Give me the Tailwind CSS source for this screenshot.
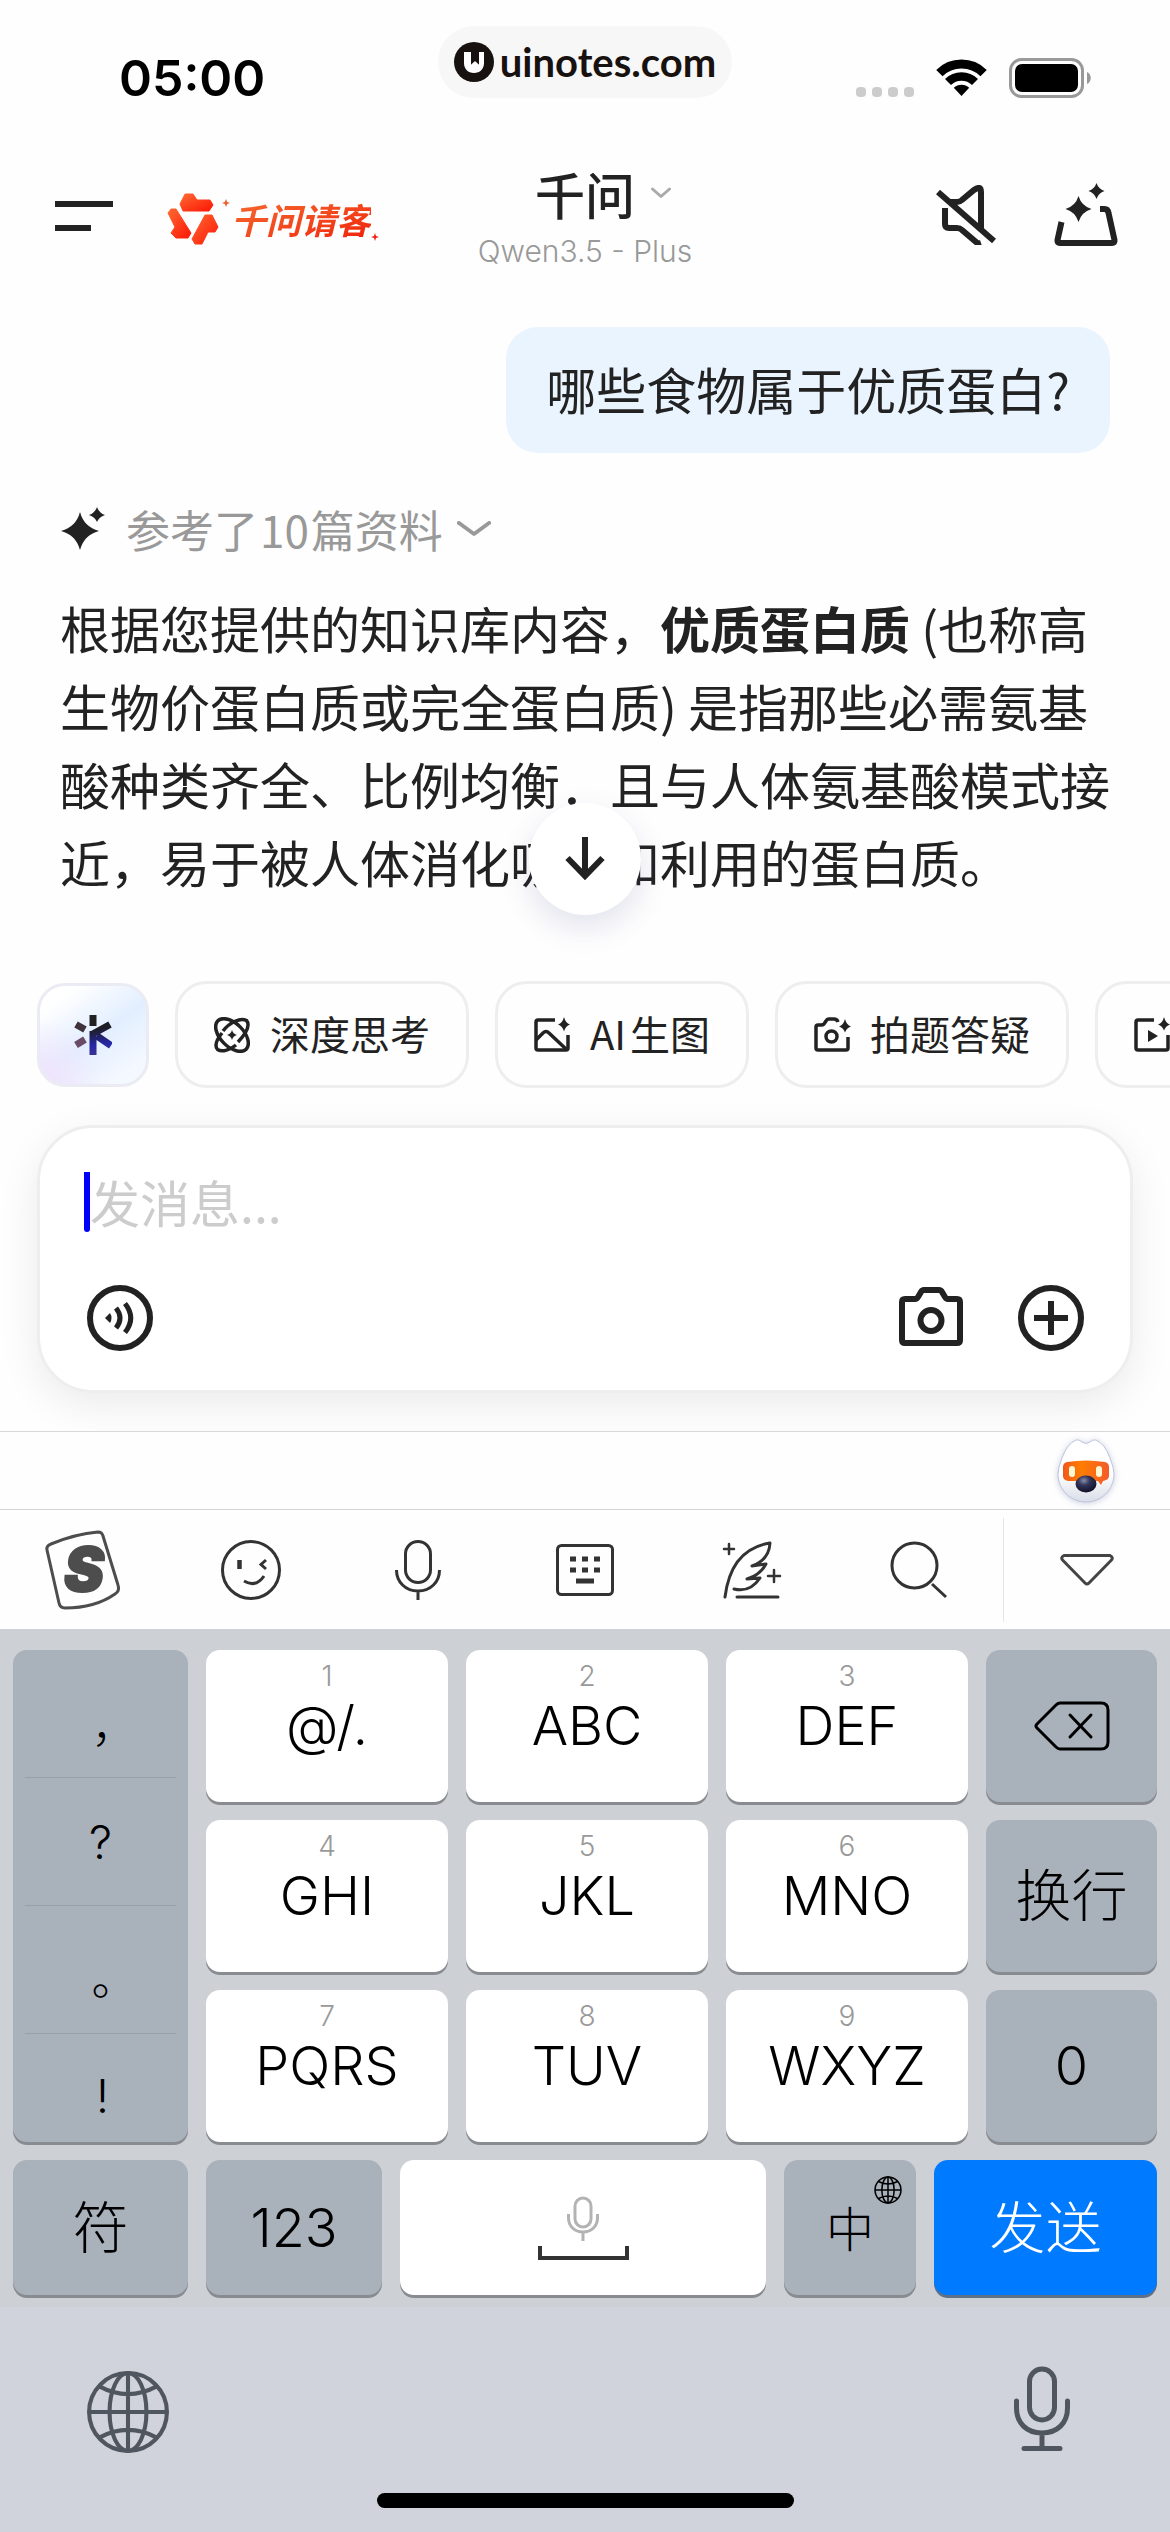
<!DOCTYPE html>
<html lang="zh-CN">
<head>
  <meta charset="utf-8"/>
  <meta content="width=device-width, initial-scale=1.0" name="viewport"/>
  <title>千问</title>
  <script src="https://cdn.jsdelivr.net/npm/@tailwindcss/browser@4"></script>
</head>
<body class="flex min-h-screen flex-col overflow-x-hidden bg-[#fefefe] font-['Noto_Sans_CJK_SC',sans-serif] text-[#222]">

  <!-- Status bar -->
  <div class="grid grid-cols-[1fr_auto_1fr] items-end pt-[26px]">
    <div class="pl-[119px] font-['Inter',sans-serif] text-[50px] leading-10 font-semibold text-black">05:00</div>
    <div class="flex h-18 items-center gap-1.5 rounded-full bg-[#f7f7f7] pr-4 pl-4">
      <svg class="size-10" viewBox="0 0 40 40">
        <circle cx="20" cy="20" r="20" fill="#171210"/>
        <path d="M10 10h7v12.500l4-3.500 4 3.500V10h5v11c0 6-4 10-10 10s-10-4-10-10z" fill="#fff"/>
        <path d="M17 10h8v12.500l-4-4-4 4z" fill="#171210"/>
      </svg>
      <span class="font-['Lato',sans-serif] text-[40px] leading-10 font-bold text-[#171210]">uinotes.com</span>
    </div>
    <div class="flex items-center justify-end pr-[79px]">
      <div class="mt-7 mr-[22px] flex gap-1.5">
        <i class="size-2.5 rounded-[4px] bg-[#ccc]"></i>
        <i class="size-2.5 rounded-[4px] bg-[#ccc]"></i>
        <i class="size-2.5 rounded-[4px] bg-[#ccc]"></i>
        <i class="size-2.5 rounded-[4px] bg-[#ccc]"></i>
      </div>
      <svg class="mr-[22px] h-[38px] w-[51px]" viewBox="0 0 51 38" fill="none" stroke="#000">
        <path d="M3.400 14.100a31.500 31.500 0 0 1 44.200 0" stroke-width="9"/>
        <path d="M12 23a19.200 19.200 0 0 1 27 0" stroke-width="8.500"/>
        <path d="M25.500 37l-7.700-8.200a11 11 0 0 1 15.400 0z" fill="#000" stroke="none"/>
      </svg>
      <svg class="h-10 w-[82px]" viewBox="0 0 82 40">
        <rect x="1.500" y="1.500" width="72" height="37" rx="11" fill="none" stroke="#999" stroke-width="3"/>
        <rect x="6" y="6" width="63" height="28" rx="7"/>
        <path d="M78 14c5 2 5 10 0 12z" fill="#999"/>
      </svg>
    </div>
  </div>

  <!-- Header -->
  <header class="mt-[69px] grid grid-cols-[1fr_auto_1fr] items-center">
    <div class="flex items-center pl-[55px]">
      <button aria-label="菜单" class="mr-[54px]">
        <svg class="block h-9 w-[58px]" viewBox="0 0 58 36" fill="#222"><path d="M0 0h58v6H0zM0 24h36v6H0z"/></svg>
      </button>
      <a href="#" class="flex items-center">
        <svg class="size-[52px]" viewBox="0 0 52 52" stroke-linejoin="round">
          <defs>
            <linearGradient id="flame" x1="0" y1="0" x2="1" y2="1"><stop stop-color="#ff6a33"/><stop offset="1" stop-color="#fb1505"/></linearGradient>
          </defs>
          <g fill="url(#flame)" stroke="url(#flame)" stroke-width="1">
            <path d="M13 11l5-10h8l4 6h13l3 5-4 6H16z"/>
            <path d="M1 20l3-4h5l15 24-3 5H9l-5-5 4-6z"/>
            <path d="M38 22h7l6 12-3 5h-7l-6 12h-7l-3-5z"/>
          </g>
        </svg>
        <svg class="mb-8 size-3" viewBox="0 0 12 12" fill="#f0602c"><path d="M7 2l1.200 3 2.800 1-2.800 1L7 10 5.800 7 3 6l2.800-1z"/></svg>
        <span class="bg-gradient-to-br from-[#f56a30] to-[#f01808] bg-clip-text text-[35px] leading-11 font-bold text-transparent italic">千问请客</span>
        <svg class="mt-9 size-2" viewBox="0 0 8 8" fill="#f02010"><path d="M4 0l1 3 3 1-3 1-1 3-1-3-3-1 3-1z"/></svg>
      </a>
    </div>
    <button class="flex flex-col items-center gap-3">
      <span class="flex items-center gap-4">
        <span class="pl-9 text-[50px] leading-13 font-medium">千问</span>
        <svg class="h-3 w-5" viewBox="0 0 20 12" fill="none" stroke="#aaa" stroke-width="3" stroke-linecap="round" stroke-linejoin="round"><path d="M1.500 2L10 9.500 18.500 2"/></svg>
      </span>
      <span class="font-['Inter',sans-serif] text-[30px] leading-10 font-light text-[#999]">Qwen3.5 - Plus</span>
    </button>
    <div class="flex items-center justify-end gap-[58px] pr-[52px] pb-2">
      <button aria-label="静音">
        <svg class="block size-[60px]" viewBox="0 0 60 60" fill="none" stroke="#222" stroke-width="6">
          <path d="M2 7l56 49"/>
          <path d="M9 23v16q0 4 4 4h8q3 0 5 2l14 12q2 2 5 1"/>
          <path d="M14 17h7q3 0 5-2L38 5q7-5 7 2v37"/>
        </svg>
      </button>
      <button aria-label="新对话">
        <svg class="block size-16" viewBox="0 0 64 64" fill="none" stroke="#222" stroke-width="6">
          <path d="M7.500 39L3.500 57q-.5 3 2.500 3h52q3 0 2.500-3L54.500 30q-.7-4-4-4H46"/>
          <path d="M24.500 13q3 10 13 13-10 3-13 13-3-10-13-13 10-3 13-13zM42.500 0q2 6 8 8-6 2-8 8-2-6-8-8 6-2 8-8z" fill="#222" stroke="none"/>
        </svg>
      </button>
    </div>
  </header>

  <!-- Conversation -->
  <main class="relative flex-1 px-[60px] pt-14 pb-[81px]">
    <div class="ml-auto w-fit rounded-4xl bg-[#eaf4ff] px-10 pt-[31px] pb-[35px] text-[50px] leading-[60px]">哪些食物属于优质蛋白?</div>
    <button class="mt-12 flex items-center text-[44px] leading-14 text-[#999]">
      <svg class="mr-5 h-11 w-[46px]" viewBox="0 0 46 44" fill="#222">
        <path d="M20 5q4 15 19 19-15 4-19 19Q16 28 1 24 16 20 20 5zM37 0q2 6 8 8-6 2-8 7-2-5-8-7 6-2 8-8z"/>
      </svg>
      参考了<span class="mx-0.5">10</span>篇资料
      <svg class="ml-3.5 h-4 w-[34px]" viewBox="0 0 34 16" fill="none" stroke="#999" stroke-width="4" stroke-linecap="round" stroke-linejoin="round"><path d="M2 2l15 11L32 2"/></svg>
    </button>
    <p class="-mr-1 mt-[31px] text-[50px] leading-[78px]">根据您提供的知识库内容，<strong class="font-bold">优质蛋白质</strong> (也称高生物价蛋白质或完全蛋白质) 是指那些必需氨基酸种类齐全、比例均衡．且与人体氨基酸模式接近，易于被人体消化吸收和利用的蛋白质。</p>
    <button aria-label="滚动到底部" class="absolute bottom-[66px] left-1/2 flex size-28 -translate-x-1/2 items-center justify-center rounded-full bg-white shadow-[0_12px_30px_rgba(80,80,150,0.16)]">
      <svg class="h-11 w-10" viewBox="0 0 40 44" fill="none" stroke="#222" stroke-width="6"><path d="M20 0v40M2.500 21L20 39l17.500-18"/></svg>
    </button>
  </main>

  <!-- Quick actions -->
  <div class="flex items-center gap-[26px] overflow-hidden pl-[37px] whitespace-nowrap">
    <button aria-label="千问助手" class="flex h-[104px] w-28 shrink-0 items-center justify-center rounded-[28px] border-3 border-[#ebebf3] bg-[radial-gradient(circle_at_0%_100%,#f1e2fb_0%,transparent_45%),linear-gradient(145deg,#fff_15%,#e2eeff_52%,#f4f8ff_85%)]">
      <svg class="h-10 w-[38px]" viewBox="0 0 38 40" fill="none" stroke-width="7">
        <defs>
          <linearGradient id="ink" gradientUnits="userSpaceOnUse" x1="18" y1="0" x2="24" y2="40"><stop offset=".35" stop-color="#1d1d22"/><stop offset=".75" stop-color="#2626a8"/><stop offset="1" stop-color="#3c3390"/></linearGradient>
        </defs>
        <path d="M19 0v11" stroke="#222"/>
        <path d="M19 16v24M17 20l19-10.500M23 21l14 9.500" stroke="url(#ink)"/>
        <path d="M2 9.500l9 5" stroke="#40333c"/>
        <path d="M2 30l9-5.500" stroke="#6a4a66"/>
      </svg>
    </button>
    <button class="flex h-[107px] shrink-0 items-center gap-5 rounded-[32px] border-3 border-[#eee] px-9 text-[40px] leading-12">
      <svg class="size-9" viewBox="0 0 36 36" fill="none" stroke="#222" stroke-width="3.500">
        <ellipse cx="18" cy="18" rx="20" ry="11.500" transform="rotate(45 18 18)"/>
        <path d="M9 14A20 11.500 -45 0 1 32.500 3.500Q38 10 24 25M22 28A20 11.500 -45 0 1 3.500 32.500Q-1 27 8 16"/>
        <path d="M18 13q1 4 5 5-4 1-5 5-1-4-5-5 4-1 5-5z" fill="#222" stroke="none"/>
      </svg>
      <span class="pb-1">深度思考</span>
    </button>
    <button class="flex h-[107px] shrink-0 items-center gap-5 rounded-[32px] border-3 border-[#eee] px-9 text-[40px] leading-12">
      <svg class="size-9" viewBox="0 0 36 36" fill="none" stroke="#222" stroke-width="3.500">
        <path d="M21 3H4Q2 3 2 5v26q0 2 2 2h28q2 0 2-2V18"/>
        <path d="M2 23l7-7q3-3 6 0l17 16"/>
        <path d="M30 0q1.500 6 6 7.500-4.500 1.500-6 7-1.500-5.500-6-7 4.500-1.500 6-7.500z" fill="#222" stroke="none"/>
      </svg>
      <span class="pb-1">AI<span class="ml-1">生图</span></span>
    </button>
    <button class="flex h-[107px] shrink-0 items-center gap-5 rounded-[32px] border-3 border-[#eee] px-9 text-[40px] leading-12">
      <svg class="size-9 overflow-visible" viewBox="0 0 36 36" fill="none" stroke="#222" stroke-width="3.500">
        <path d="M24 5q-1-3-4-3h-5q-2 0-3 2l-2 3q-1 1-3 1H4Q2 8 2 10v21q0 2 2 2h28q2 0 2-2V20"/>
        <circle cx="17.500" cy="19.500" r="5.500"/>
        <path d="M31 2q1.500 6 6 7.500-4.500 1.500-6 6-1.500-4.500-6-6 4.500-1.500 6-7.500z" fill="#222" stroke="none"/>
      </svg>
      <span class="pb-1">拍题答疑</span>
    </button>
    <button aria-label="视频" class="flex h-[107px] w-[250px] shrink-0 items-center rounded-[32px] border-3 border-[#eee] px-9">
      <svg class="size-9" viewBox="0 0 36 36" fill="none" stroke="#222" stroke-width="3.500">
        <path d="M20 3H4Q2 3 2 5v26q0 2 2 2h28q2 0 2-2V18"/>
        <path d="M14 13l10 6-10 6z" fill="#222" stroke="none"/>
        <path d="M30 0q1.500 6 6 7.500-4.500 1.500-6 6-1.500-4.500-6-6 4.500-1.500 6-7.500z" fill="#222" stroke="none"/>
      </svg>
    </button>
  </div>

  <!-- Composer -->
  <form class="relative mx-[37px] mt-[37px] mb-[38px] rounded-[56px] border-3 border-[#eee] bg-white pt-11 pr-[45px] pb-[38px] pl-[44px] shadow-[0_12px_40px_rgba(0,0,0,0.08)]">
    <div class="flex items-center">
      <i class="h-15 w-1.5 rounded-b-sm bg-[#0000fa]"></i>
      <input aria-label="发消息" type="text" placeholder="发消息..." class="h-15 min-w-0 flex-1 pb-0.5 text-[50px] leading-[60px] outline-none placeholder:text-[#ccc]"/>
    </div>
    <div class="mt-[52px] flex items-center">
      <button type="button" aria-label="语音输入" class="ml-0.5">
        <svg class="block size-[68px]" viewBox="0 0 68 68" fill="none" stroke="#222" stroke-width="6">
          <circle cx="34" cy="34" r="30"/>
          <path d="M19 34l5-5q3 5 0 10z" fill="#222" stroke="none"/>
          <path d="M30 24q8 10 0 20M39 19.500q11.500 14.500 0 29" stroke-width="5"/>
        </svg>
      </button>
      <button type="button" aria-label="拍照" class="ml-auto">
        <svg class="block size-[68px]" viewBox="0 0 68 68" fill="none" stroke="#222" stroke-width="6" stroke-linejoin="round">
          <path d="M8 15h10q2 0 3-2l3-5q1-2 3-2h15q2 0 3 2l3 5q1 2 3 2h9q3 0 3 3v38q0 3-3 3H8q-3 0-3-3V18q0-3 3-3z"/>
          <circle cx="34" cy="36.500" r="10.500"/>
        </svg>
      </button>
      <button type="button" aria-label="更多" class="ml-13">
        <svg class="block size-[68px]" viewBox="0 0 68 68" fill="none" stroke="#222" stroke-width="6">
          <circle cx="34" cy="34" r="30"/><path d="M34 17v34M17 34h34"/>
        </svg>
      </button>
    </div>
  </form>

  <!-- Keyboard accessory strip -->
  <div class="z-10 flex h-[78px] items-center justify-end border-t border-[#d6d8d9] bg-[#fefefe] pr-[54px]">
    <button aria-label="输入助手">
      <svg class="block h-[66px] w-[60px] drop-shadow-[0_1px_3px_rgba(90,100,160,0.3)]" viewBox="0 0 60 66">
        <defs>
          <linearGradient id="shell" x1="0" y1="0" x2="0" y2="1"><stop offset=".55" stop-color="#fff"/><stop offset="1" stop-color="#d8dde8"/></linearGradient>
          <linearGradient id="visor"><stop stop-color="#f2571c"/><stop offset=".4" stop-color="#ff7d00"/><stop offset="1" stop-color="#f55a2a"/></linearGradient>
          <radialGradient id="nose" cx=".4" cy=".3" r=".7"><stop stop-color="#8a8caa"/><stop offset=".4" stop-color="#33355a"/><stop offset="1" stop-color="#101228"/></radialGradient>
        </defs>
        <path d="M20 2q3-1 6 2 4 3 8 0 3-3 6-2 9 4 14 18 4 10 4 16c0 16-13 28-28 28S2 52 2 36Q2 30 6 20 11 6 20 2z" fill="url(#shell)" stroke="#bcc4dc"/>
        <path d="M11 24q19-3 38 0 4 1 4 5v9q0 4-6 5l-2 4-3-4H12q-5-1-5-5v-9q0-4 4-5z" fill="url(#visor)"/>
        <rect x="13" y="28" width="6" height="11" rx="3" fill="#fff8d0"/>
        <rect x="40" y="28" width="6" height="11" rx="3" fill="#fff8d0"/>
        <ellipse cx="30" cy="46" rx="10.500" ry="8.500" fill="url(#nose)"/>
      </svg>
    </button>
  </div>

  <!-- Keyboard toolbar -->
  <div class="z-10 grid h-[120px] grid-cols-7 items-center justify-items-center border-t border-[#d2d5d7] bg-[#fefefe]">
    <button aria-label="搜狗输入法">
      <svg class="block size-20" viewBox="0 0 80 80" fill="none" stroke="#4d4d4d" stroke-width="3">
        <path d="M7 14Q31 4 54 2q4 0 5 4l15 49q2 6-3 9-20 14-50 14-5 0-6-5L3 20q-1-4 4-6z"/>
        <text x="40" y="61" text-anchor="middle" fill="#4d4d4d" stroke-width="2" font-family="Inter" font-weight="900" font-style="italic" font-size="60">S</text>
      </svg>
    </button>
    <button aria-label="表情">
      <svg class="block size-[62px]" viewBox="0 0 62 62" fill="none" stroke="#333" stroke-width="3">
        <circle cx="31" cy="31" r="28.500"/>
        <path d="M19.500 21v9" stroke-width="4.500"/><path d="M46 21l-5 4.500 5 4.500M24 42q12 7 20-5"/>
      </svg>
    </button>
    <button aria-label="语音">
      <svg class="block h-[62px] w-12" viewBox="0 0 48 62" fill="none" stroke="#333" stroke-width="3">
        <rect x="11.500" y="2.500" width="25" height="41" rx="12.500"/>
        <path d="M2.500 31c0 12 9 21 21.500 21s21.500-9 21.500-21M24 52v9"/>
      </svg>
    </button>
    <button aria-label="切换键盘">
      <svg class="block h-[52px] w-[58px]" viewBox="0 0 58 52" fill="none" stroke="#333" stroke-width="3">
        <rect x="1.500" y="1.500" width="55" height="49" rx="4"/>
        <path d="M14 15h32M14 26h32" stroke-width="5" stroke-dasharray="6 6"/><path d="M20 37h18" stroke-width="5"/>
      </svg>
    </button>
    <button aria-label="写作">
      <svg class="block size-15" viewBox="0 0 60 60" fill="none" stroke="#333" stroke-width="3" stroke-linecap="round" stroke-linejoin="round">
        <path d="M3 57Q9 9 48 3q-1 17-18 23l14-2q-6 11-19 15l13-1q-10 15-26 11M15 57h41"/>
        <path d="M7 4v10M2 9h10M52 30v12M46 36h12" stroke-width="2.500"/>
      </svg>
    </button>
    <button aria-label="搜索">
      <svg class="block size-[58px]" viewBox="0 0 58 58" fill="none" stroke="#333" stroke-width="3">
        <circle cx="24.500" cy="24.500" r="22.500"/><path d="M42 43l14 13"/>
      </svg>
    </button>
    <button aria-label="收起键盘" class="flex h-[104px] w-full items-center justify-center border-l border-[#e6e6e6]">
      <svg class="block h-8 w-[54px]" viewBox="0 0 54 32" fill="none" stroke="#444" stroke-width="3" stroke-linejoin="round"><path d="M4 1.500h46q4 2 1 5L29 29q-2 2-4 0L3 6.500q-3-3 1-5z"/></svg>
    </button>
  </div>

  <!-- Nine-key pad -->
  <div class="bg-[#cdd0d5] px-[13px] pt-[21px] pb-3 font-['Inter','Noto_Sans_CJK_SC',sans-serif] text-[54px] leading-14 font-light text-black">
    <div class="grid grid-cols-[175fr_242fr_242fr_242fr_171fr] grid-rows-[152px_152px_152px] gap-[18px]">
      <div class="row-span-3 flex flex-col rounded-[14px] bg-[#a9b1bb] px-3 text-[46px] shadow-[0_3px_0_#888c91]">
        <button class="h-32 border-b border-[#989fa9] pt-4 pl-7 font-['Noto_Sans_CJK_SC',sans-serif]">，</button>
        <button class="h-32 border-b border-[#989fa9]">?</button>
        <button class="h-32 border-b border-[#989fa9] pt-4 pl-7">。</button>
        <button class="flex-1 pt-4 pl-1">!</button>
      </div>
      <button class="flex flex-col items-center gap-2 rounded-[14px] bg-white pt-3 shadow-[0_3px_0_#888c91]"><span class="text-[28px] leading-7 text-[#999]">1</span>@/.</button>
      <button class="flex flex-col items-center gap-2 rounded-[14px] bg-white pt-3 shadow-[0_3px_0_#888c91]"><span class="text-[28px] leading-7 text-[#999]">2</span>ABC</button>
      <button class="flex flex-col items-center gap-2 rounded-[14px] bg-white pt-3 shadow-[0_3px_0_#888c91]"><span class="text-[28px] leading-7 text-[#999]">3</span>DEF</button>
      <button aria-label="删除" class="flex items-center justify-center rounded-[14px] bg-[#a9b1bb] shadow-[0_3px_0_#888c91]">
        <svg class="h-[50px] w-[76px]" viewBox="0 0 76 50" fill="none" stroke="#000" stroke-width="3" stroke-linecap="round" stroke-linejoin="round">
          <path d="M26 2h41q7 0 7 7v32q0 7-7 7H26q-2 0-4-2L3 27q-2-2 0-4L22 4q2-2 4-2z"/><path d="M36 14l21 22M57 14L36 36"/>
        </svg>
      </button>
      <button class="flex flex-col items-center gap-2 rounded-[14px] bg-white pt-3 shadow-[0_3px_0_#888c91]"><span class="text-[28px] leading-7 text-[#999]">4</span>GHI</button>
      <button class="flex flex-col items-center gap-2 rounded-[14px] bg-white pt-3 shadow-[0_3px_0_#888c91]"><span class="text-[28px] leading-7 text-[#999]">5</span>JKL</button>
      <button class="flex flex-col items-center gap-2 rounded-[14px] bg-white pt-3 shadow-[0_3px_0_#888c91]"><span class="text-[28px] leading-7 text-[#999]">6</span>MNO</button>
      <button class="rounded-[14px] bg-[#a9b1bb] text-[56px] shadow-[0_3px_0_#888c91]">换行</button>
      <button class="flex flex-col items-center gap-2 rounded-[14px] bg-white pt-3 shadow-[0_3px_0_#888c91]"><span class="text-[28px] leading-7 text-[#999]">7</span>PQRS</button>
      <button class="flex flex-col items-center gap-2 rounded-[14px] bg-white pt-3 shadow-[0_3px_0_#888c91]"><span class="text-[28px] leading-7 text-[#999]">8</span>TUV</button>
      <button class="flex flex-col items-center gap-2 rounded-[14px] bg-white pt-3 shadow-[0_3px_0_#888c91]"><span class="text-[28px] leading-7 text-[#999]">9</span>WXYZ</button>
      <button class="rounded-[14px] bg-[#a9b1bb] shadow-[0_3px_0_#888c91]">0</button>
    </div>
    <div class="mt-[18px] grid h-[135px] grid-cols-[175fr_176fr_366fr_132fr_223fr] gap-[18px]">
      <button class="rounded-[14px] bg-[#a9b1bb] text-[56px] shadow-[0_3px_0_#888c91]">符</button>
      <button class="rounded-[14px] bg-[#a9b1bb] shadow-[0_3px_0_#888c91]">123</button>
      <button aria-label="空格" class="flex flex-col items-center gap-1 rounded-[14px] bg-white pt-9 shadow-[0_3px_0_#888c91]">
        <svg class="h-[46px] w-8" viewBox="0 0 32 46" fill="none" stroke="#b3b3b3" stroke-width="3">
          <rect x="8" y="2" width="16" height="29" rx="8"/>
          <path d="M1.500 18v4c0 8 6 14 14.500 14s14.500-6 14.500-14v-4M16 36v9"/>
        </svg>
        <svg class="h-3.5 w-[91px]" viewBox="0 0 91 14" fill="none" stroke="#333" stroke-width="4"><path d="M2 0v12h87V0"/></svg>
      </button>
      <button class="relative rounded-[14px] bg-[#a9b1bb] pt-1 text-[48px] shadow-[0_3px_0_#888c91]">中
        <svg class="absolute top-4 right-3.5 size-7" viewBox="0 0 82 82" fill="none" stroke="#000" stroke-width="4.500">
          <circle cx="41" cy="41" r="38"/><ellipse cx="41" cy="41" rx="18" ry="38"/>
          <path d="M41 3v76M3 41h76M13 16q28 15 56 0M13 66q28-15 56 0"/>
        </svg>
      </button>
      <button class="rounded-[14px] bg-[#007aff] text-[56px] text-white shadow-[0_3px_0_#5f7187]">发送</button>
    </div>
  </div>

  <!-- System bar -->
  <div class="flex h-[225px] flex-col justify-between bg-[#d0d3db] pt-[59px] pb-6">
    <div class="flex items-start justify-between pr-[99px] pl-[86px]">
      <button aria-label="切换语言" class="pt-1">
        <svg class="block size-[84px]" viewBox="0 0 82 82" fill="none" stroke="#50565f" stroke-width="4">
          <circle cx="41" cy="41" r="38"/><ellipse cx="41" cy="41" rx="18" ry="38"/>
          <path d="M41 3v76M3 41h76M13 16q28 15 56 0M13 66q28-15 56 0"/>
        </svg>
      </button>
      <button aria-label="听写">
        <svg class="block h-[86px] w-[58px]" viewBox="0 0 58 86" fill="none" stroke="#50565f" stroke-width="5" stroke-linecap="round">
          <rect x="16.500" y="3" width="25" height="51" rx="12.500"/>
          <path d="M3.500 35v7c0 15 10 25 25.500 25s25.500-10 25.500-25v-7M29 67v15M11 82.500h36"/>
        </svg>
      </button>
    </div>
    <div class="mx-auto h-[15px] w-[417px] rounded-full bg-black"></div>
  </div>
</body>
</html>
